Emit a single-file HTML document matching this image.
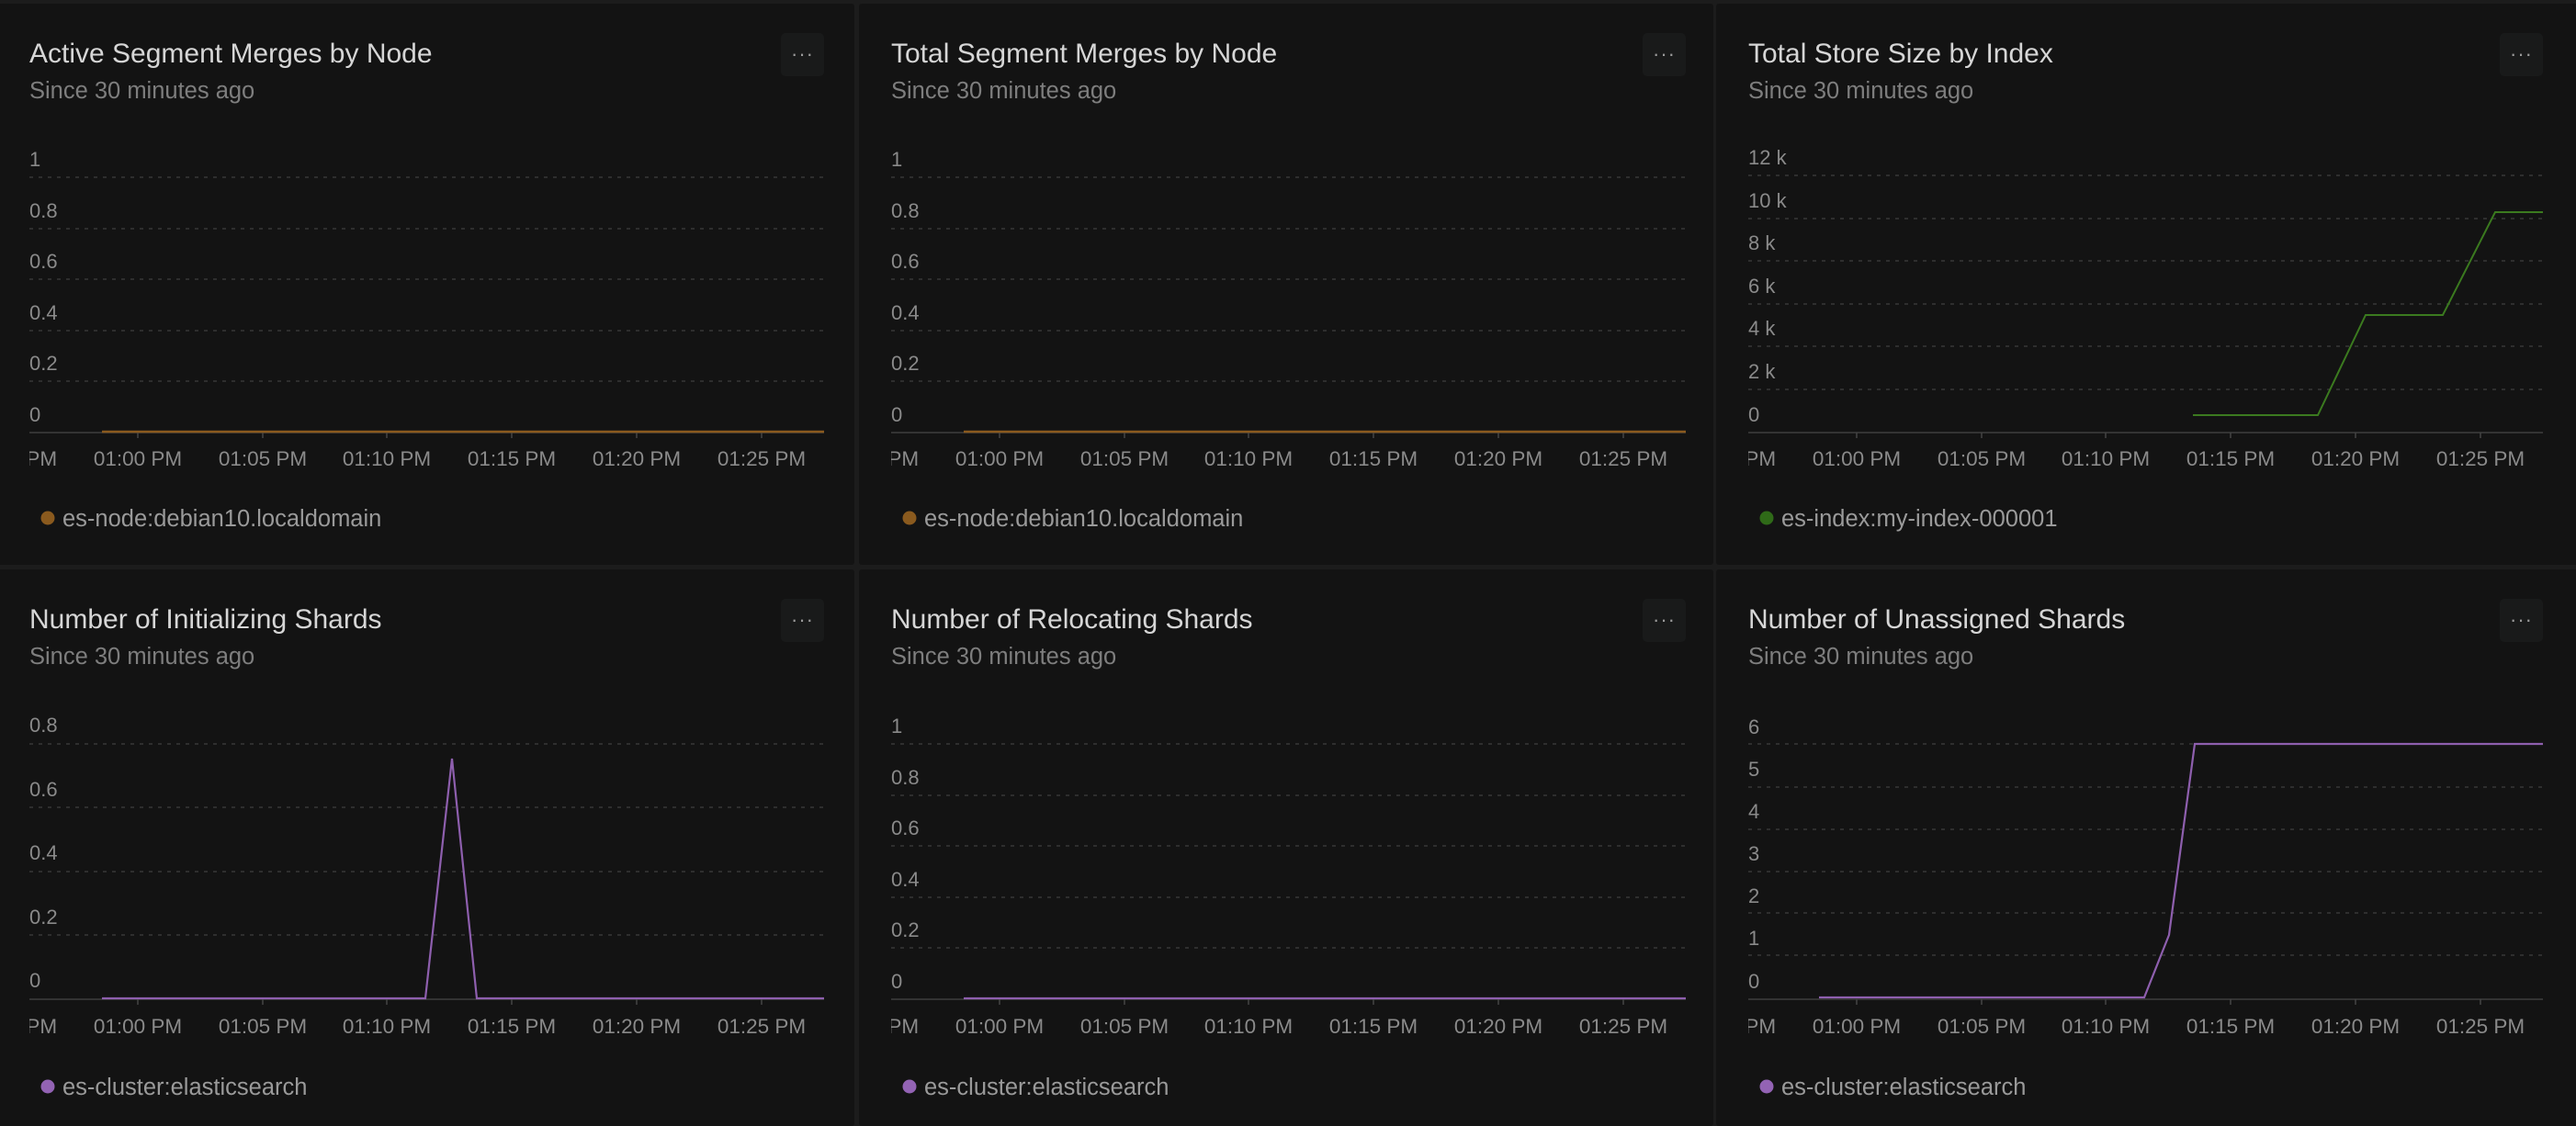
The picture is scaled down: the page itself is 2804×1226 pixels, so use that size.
<!DOCTYPE html>
<html><head><meta charset="utf-8"><style>
html,body{margin:0;padding:0;background:#1c1c1c;width:2804px;height:1226px;overflow:hidden;font-family:"Liberation Sans",sans-serif}
.p{position:absolute;background:#131313;border-radius:3px;overflow:hidden}
.t{position:absolute;left:35px;top:38px;font-size:30px;color:#d6d6d6;white-space:nowrap}
.s{position:absolute;left:35px;top:81px;font-size:25.5px;color:#7e7e7e;white-space:nowrap}
.m{position:absolute;left:853px;top:32px;width:47px;height:47px;border-radius:5px;background:#191a1a;color:#9a9a9a;font-size:22px;text-align:center;line-height:46px;letter-spacing:1px}
svg{position:absolute;left:0;top:0}
svg text{font-family:"Liberation Sans",sans-serif}
.yl{font-size:22px;fill:#8a8a8a}
.xl{font-size:22.5px;fill:#8a8a8a;text-anchor:middle}
.lg{font-size:25.5px;fill:#9a9a9a}
.g{stroke:#383838;stroke-width:1.5;stroke-dasharray:4 6}
.ax{stroke:#333;stroke-width:2}
.tk{stroke:#444;stroke-width:1.5}
</style></head><body>

<!-- Row 1 Col 1 -->
<div class="p" style="left:-3px;top:4px;width:933px;height:611px">
<div class="t">Active Segment Merges by Node</div><div class="s">Since 30 minutes ago</div><div class="m">···</div>
<svg width="933" height="611">
<defs><clipPath id="c1"><rect x="35" y="0" width="870" height="611"/></clipPath></defs>
<text class="yl" x="35" y="177">1</text><text class="yl" x="35" y="233">0.8</text><text class="yl" x="35" y="288">0.6</text><text class="yl" x="35" y="344">0.4</text><text class="yl" x="35" y="399">0.2</text><text class="yl" x="35" y="455">0</text>
<line class="g" x1="35" x2="900" y1="189" y2="189"/><line class="g" x1="35" x2="900" y1="245" y2="245"/><line class="g" x1="35" x2="900" y1="300" y2="300"/><line class="g" x1="35" x2="900" y1="356" y2="356"/><line class="g" x1="35" x2="900" y1="411" y2="411"/>
<line class="ax" x1="35" x2="900" y1="467" y2="467"/>
<g class="tk"><line x1="153" x2="153" y1="467" y2="473"/><line x1="289" x2="289" y1="467" y2="473"/><line x1="424" x2="424" y1="467" y2="473"/><line x1="560" x2="560" y1="467" y2="473"/><line x1="696" x2="696" y1="467" y2="473"/><line x1="832" x2="832" y1="467" y2="473"/></g>
<g clip-path="url(#c1)"><text class="xl" x="17" y="503">12:55 PM</text></g>
<text class="xl" x="153" y="503">01:00 PM</text><text class="xl" x="289" y="503">01:05 PM</text><text class="xl" x="424" y="503">01:10 PM</text><text class="xl" x="560" y="503">01:15 PM</text><text class="xl" x="696" y="503">01:20 PM</text><text class="xl" x="832" y="503">01:25 PM</text>
<line x1="114" x2="900" y1="466" y2="466" stroke="#8a5a1e" stroke-width="2.5"/>
<circle cx="55" cy="560" r="7.5" fill="#8a5a1e"/><text class="lg" x="71" y="569">es-node:debian10.localdomain</text>
</svg></div>

<!-- Row 1 Col 2 -->
<div class="p" style="left:935px;top:4px;width:930px;height:611px">
<div class="t">Total Segment Merges by Node</div><div class="s">Since 30 minutes ago</div><div class="m">···</div>
<svg width="930" height="611">
<defs><clipPath id="c2"><rect x="35" y="0" width="870" height="611"/></clipPath></defs>
<text class="yl" x="35" y="177">1</text><text class="yl" x="35" y="233">0.8</text><text class="yl" x="35" y="288">0.6</text><text class="yl" x="35" y="344">0.4</text><text class="yl" x="35" y="399">0.2</text><text class="yl" x="35" y="455">0</text>
<line class="g" x1="35" x2="900" y1="189" y2="189"/><line class="g" x1="35" x2="900" y1="245" y2="245"/><line class="g" x1="35" x2="900" y1="300" y2="300"/><line class="g" x1="35" x2="900" y1="356" y2="356"/><line class="g" x1="35" x2="900" y1="411" y2="411"/>
<line class="ax" x1="35" x2="900" y1="467" y2="467"/>
<g class="tk"><line x1="153" x2="153" y1="467" y2="473"/><line x1="289" x2="289" y1="467" y2="473"/><line x1="424" x2="424" y1="467" y2="473"/><line x1="560" x2="560" y1="467" y2="473"/><line x1="696" x2="696" y1="467" y2="473"/><line x1="832" x2="832" y1="467" y2="473"/></g>
<g clip-path="url(#c2)"><text class="xl" x="17" y="503">12:55 PM</text></g>
<text class="xl" x="153" y="503">01:00 PM</text><text class="xl" x="289" y="503">01:05 PM</text><text class="xl" x="424" y="503">01:10 PM</text><text class="xl" x="560" y="503">01:15 PM</text><text class="xl" x="696" y="503">01:20 PM</text><text class="xl" x="832" y="503">01:25 PM</text>
<line x1="114" x2="900" y1="466" y2="466" stroke="#8a5a1e" stroke-width="2.5"/>
<circle cx="55" cy="560" r="7.5" fill="#8a5a1e"/><text class="lg" x="71" y="569">es-node:debian10.localdomain</text>
</svg></div>

<!-- Row 1 Col 3 -->
<div class="p" style="left:1868px;top:4px;width:940px;height:611px">
<div class="t">Total Store Size by Index</div><div class="s">Since 30 minutes ago</div><div class="m">···</div>
<svg width="940" height="611">
<defs><clipPath id="c3"><rect x="35" y="0" width="870" height="611"/></clipPath></defs>
<text class="yl" x="35" y="175">12 k</text><text class="yl" x="35" y="222">10 k</text><text class="yl" x="35" y="268">8 k</text><text class="yl" x="35" y="315">6 k</text><text class="yl" x="35" y="361">4 k</text><text class="yl" x="35" y="408">2 k</text><text class="yl" x="35" y="455">0</text>
<line class="g" x1="35" x2="900" y1="187" y2="187"/><line class="g" x1="35" x2="900" y1="234" y2="234"/><line class="g" x1="35" x2="900" y1="280" y2="280"/><line class="g" x1="35" x2="900" y1="327" y2="327"/><line class="g" x1="35" x2="900" y1="373" y2="373"/><line class="g" x1="35" x2="900" y1="420" y2="420"/>
<line class="ax" x1="35" x2="900" y1="467" y2="467"/>
<g class="tk"><line x1="153" x2="153" y1="467" y2="473"/><line x1="289" x2="289" y1="467" y2="473"/><line x1="424" x2="424" y1="467" y2="473"/><line x1="560" x2="560" y1="467" y2="473"/><line x1="696" x2="696" y1="467" y2="473"/><line x1="832" x2="832" y1="467" y2="473"/></g>
<g clip-path="url(#c3)"><text class="xl" x="17" y="503">12:55 PM</text></g>
<text class="xl" x="153" y="503">01:00 PM</text><text class="xl" x="289" y="503">01:05 PM</text><text class="xl" x="424" y="503">01:10 PM</text><text class="xl" x="560" y="503">01:15 PM</text><text class="xl" x="696" y="503">01:20 PM</text><text class="xl" x="832" y="503">01:25 PM</text>
<polyline points="519,448 655,448 707,339 791,339 848,227 900,227" fill="none" stroke="#3b7a1f" stroke-width="2"/>
<circle cx="55" cy="560" r="7.5" fill="#2f6a18"/><text class="lg" x="71" y="569">es-index:my-index-000001</text>
</svg></div>

<!-- Row 2 Col 1 -->
<div class="p" style="left:-3px;top:620px;width:933px;height:606px">
<div class="t">Number of Initializing Shards</div><div class="s">Since 30 minutes ago</div><div class="m">···</div>
<svg width="933" height="606">
<defs><clipPath id="c4"><rect x="35" y="0" width="870" height="606"/></clipPath></defs>
<text class="yl" x="35" y="177">0.8</text><text class="yl" x="35" y="247">0.6</text><text class="yl" x="35" y="316">0.4</text><text class="yl" x="35" y="386">0.2</text><text class="yl" x="35" y="455">0</text>
<line class="g" x1="35" x2="900" y1="190" y2="190"/><line class="g" x1="35" x2="900" y1="259" y2="259"/><line class="g" x1="35" x2="900" y1="329" y2="329"/><line class="g" x1="35" x2="900" y1="398" y2="398"/>
<line class="ax" x1="35" x2="900" y1="468" y2="468"/>
<g class="tk"><line x1="153" x2="153" y1="468" y2="474"/><line x1="289" x2="289" y1="468" y2="474"/><line x1="424" x2="424" y1="468" y2="474"/><line x1="560" x2="560" y1="468" y2="474"/><line x1="696" x2="696" y1="468" y2="474"/><line x1="832" x2="832" y1="468" y2="474"/></g>
<g clip-path="url(#c4)"><text class="xl" x="17" y="505">12:55 PM</text></g>
<text class="xl" x="153" y="505">01:00 PM</text><text class="xl" x="289" y="505">01:05 PM</text><text class="xl" x="424" y="505">01:10 PM</text><text class="xl" x="560" y="505">01:15 PM</text><text class="xl" x="696" y="505">01:20 PM</text><text class="xl" x="832" y="505">01:25 PM</text>
<polyline points="114,467 466,467 495,206 522,467 900,467" fill="none" stroke="#8e5fae" stroke-width="2.2"/>
<circle cx="55" cy="563" r="7.5" fill="#9363b4"/><text class="lg" x="71" y="572">es-cluster:elasticsearch</text>
</svg></div>

<!-- Row 2 Col 2 -->
<div class="p" style="left:935px;top:620px;width:930px;height:606px">
<div class="t">Number of Relocating Shards</div><div class="s">Since 30 minutes ago</div><div class="m">···</div>
<svg width="930" height="606">
<defs><clipPath id="c5"><rect x="35" y="0" width="870" height="606"/></clipPath></defs>
<text class="yl" x="35" y="178">1</text><text class="yl" x="35" y="234">0.8</text><text class="yl" x="35" y="289">0.6</text><text class="yl" x="35" y="345">0.4</text><text class="yl" x="35" y="400">0.2</text><text class="yl" x="35" y="456">0</text>
<line class="g" x1="35" x2="900" y1="190" y2="190"/><line class="g" x1="35" x2="900" y1="246" y2="246"/><line class="g" x1="35" x2="900" y1="301" y2="301"/><line class="g" x1="35" x2="900" y1="357" y2="357"/><line class="g" x1="35" x2="900" y1="412" y2="412"/>
<line class="ax" x1="35" x2="900" y1="468" y2="468"/>
<g class="tk"><line x1="153" x2="153" y1="468" y2="474"/><line x1="289" x2="289" y1="468" y2="474"/><line x1="424" x2="424" y1="468" y2="474"/><line x1="560" x2="560" y1="468" y2="474"/><line x1="696" x2="696" y1="468" y2="474"/><line x1="832" x2="832" y1="468" y2="474"/></g>
<g clip-path="url(#c5)"><text class="xl" x="17" y="505">12:55 PM</text></g>
<text class="xl" x="153" y="505">01:00 PM</text><text class="xl" x="289" y="505">01:05 PM</text><text class="xl" x="424" y="505">01:10 PM</text><text class="xl" x="560" y="505">01:15 PM</text><text class="xl" x="696" y="505">01:20 PM</text><text class="xl" x="832" y="505">01:25 PM</text>
<line x1="114" x2="900" y1="467" y2="467" stroke="#8e5fae" stroke-width="2.2"/>
<circle cx="55" cy="563" r="7.5" fill="#9363b4"/><text class="lg" x="71" y="572">es-cluster:elasticsearch</text>
</svg></div>

<!-- Row 2 Col 3 -->
<div class="p" style="left:1868px;top:620px;width:940px;height:606px">
<div class="t">Number of Unassigned Shards</div><div class="s">Since 30 minutes ago</div><div class="m">···</div>
<svg width="940" height="606">
<defs><clipPath id="c6"><rect x="35" y="0" width="870" height="606"/></clipPath></defs>
<text class="yl" x="35" y="179">6</text><text class="yl" x="35" y="225">5</text><text class="yl" x="35" y="271">4</text><text class="yl" x="35" y="317">3</text><text class="yl" x="35" y="363">2</text><text class="yl" x="35" y="409">1</text><text class="yl" x="35" y="456">0</text>
<line class="g" x1="35" x2="900" y1="190" y2="190"/><line class="g" x1="35" x2="900" y1="237" y2="237"/><line class="g" x1="35" x2="900" y1="283" y2="283"/><line class="g" x1="35" x2="900" y1="329" y2="329"/><line class="g" x1="35" x2="900" y1="374" y2="374"/><line class="g" x1="35" x2="900" y1="420" y2="420"/>
<line class="ax" x1="35" x2="900" y1="468" y2="468"/>
<g class="tk"><line x1="153" x2="153" y1="468" y2="474"/><line x1="289" x2="289" y1="468" y2="474"/><line x1="424" x2="424" y1="468" y2="474"/><line x1="560" x2="560" y1="468" y2="474"/><line x1="696" x2="696" y1="468" y2="474"/><line x1="832" x2="832" y1="468" y2="474"/></g>
<g clip-path="url(#c6)"><text class="xl" x="17" y="505">12:55 PM</text></g>
<text class="xl" x="153" y="505">01:00 PM</text><text class="xl" x="289" y="505">01:05 PM</text><text class="xl" x="424" y="505">01:10 PM</text><text class="xl" x="560" y="505">01:15 PM</text><text class="xl" x="696" y="505">01:20 PM</text><text class="xl" x="832" y="505">01:25 PM</text>
<polyline points="112,466 466,466 493,398 521,190 900,190" fill="none" stroke="#8e5fae" stroke-width="2.2"/>
<circle cx="55" cy="563" r="7.5" fill="#9363b4"/><text class="lg" x="71" y="572">es-cluster:elasticsearch</text>
</svg></div>

</body></html>
